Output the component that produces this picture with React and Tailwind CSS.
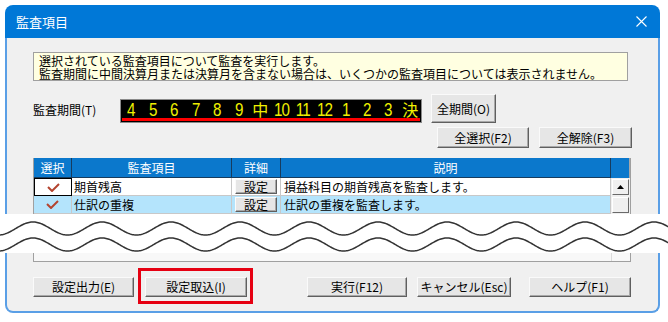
import React from "react";

const W = 668;
function wavePath(cy, amp, lambda, x0) {
  let d = "";
  for (let x = -2; x <= W + 2; x += 1) {
    const y = cy - amp * Math.cos((2 * Math.PI * (x - x0)) / lambda);
    d += (x === -2 ? "M" : "L") + x + " " + y.toFixed(2) + " ";
  }
  return d;
}

function Btn({ children, className = "" }) {
  return (
    <div
      className={`flex items-center justify-center bg-[#e6e6e6] border border-t-[#fafafa] border-l-[#fafafa] border-r-[#5f5f5f] border-b-[#5f5f5f] shadow-[inset_-1px_-1px_0_#a8a8a8] text-[12px] leading-none text-black whitespace-nowrap ${className}`}
    >
      {children}
    </div>
  );
}

function Check() {
  return (
    <svg width="13" height="9" viewBox="0 0 13 9">
      <path d="M1 4 L5 8 L12 1" fill="none" stroke="#b4442f" strokeWidth="2" strokeLinejoin="miter" />
    </svg>
  );
}

const cells = ["4", "5", "6", "7", "8", "9", "中", "10", "11", "12", "1", "2", "3", "決"];

export default function App() {
  return (
    <div className="w-[668px] h-[322px] bg-white overflow-hidden font-['Noto_Sans_CJK_JP',sans-serif] text-black">
      {/* top window fragment */}
      <div className="ml-[5px] mt-[5px] w-[655px] rounded-t-[8px] overflow-hidden">
        <div className="h-[33px] bg-[#0078d7] flex items-center justify-between pl-[11px] pr-[13px]">
          <span className="text-white text-[13px] leading-none">監査項目</span>
          <svg width="11" height="11" viewBox="0 0 11 11">
            <path d="M0.5 0.5 L10.5 10.5 M10.5 0.5 L0.5 10.5" stroke="#ffffff" strokeWidth="1.1" />
          </svg>
        </div>
        <div className="bg-[#f0f0f0] border-x-2 border-[#5a9fe6] px-[26px] pt-[14px] h-[176px] overflow-hidden">
          <div className="w-[595px] h-[29px] border border-[#a0a0a0] bg-[#ffffe1] pl-[5px] pt-[1px] text-[12px] leading-[13px] whitespace-nowrap">
            <div>選択されている監査項目について監査を実行します。</div>
            <div>監査期間に中間決算月または決算月を含まない場合は、いくつかの監査項目については表示されません。</div>
          </div>

          <div className="flex items-end mt-[13px] h-[29px]">
            <div className="w-[87px] mb-[7px] text-[12px] leading-none">監査期間(T)</div>
            <div className="w-[302px] h-[24px] bg-black border border-[#8a8a8a] flex flex-col">
              <div className="flex h-[18px] items-center">
                {cells.map((c, i) => (
                  <div key={i} className="flex-1 flex justify-center">
                    <span
                      className={
                        c.length === 1 && /[0-9]/.test(c)
                          ? "text-[#f0f000] text-[19px] leading-none font-['Liberation_Sans',sans-serif] scale-x-[0.8]"
                          : c.length === 2
                          ? "text-[#f0f000] text-[19px] leading-none font-['Liberation_Sans',sans-serif] scale-x-[0.8] tracking-[-1px]"
                          : "text-[#f0f000] text-[16px] leading-none font-['Noto_Sans_CJK_JP',sans-serif]"
                      }
                    >
                      {c}
                    </span>
                  </div>
                ))}
              </div>
              <div className="h-[3px] mx-[1px] bg-[#ff0000]" />
            </div>
            <Btn className="ml-[9px] w-[65px] h-[29px]">全期間(O)</Btn>
          </div>

          <div className="flex justify-end gap-[10px] mt-[4px]">
            <Btn className="w-[92px] h-[21px]">全選択(F2)</Btn>
            <Btn className="w-[93px] h-[21px]">全解除(F3)</Btn>
          </div>

          <div className="mt-[10px] w-[598px] border-x border-[#a0a0a0] text-[12px] leading-none">
            <div className="flex h-[20px] bg-[#0b78cc] text-white">
              <div className="w-[38px] border-r border-b border-[#173c5e] flex items-center justify-center">選択</div>
              <div className="w-[160px] border-r border-b border-[#173c5e] flex items-center justify-center">監査項目</div>
              <div className="w-[49px] border-r border-b border-[#173c5e] flex items-center justify-center">詳細</div>
              <div className="w-[330px] border-r border-b border-[#173c5e] flex items-center justify-center">説明</div>
              <div className="flex-1 border-r border-[#a8a8a8]" />
            </div>
            <div className="flex h-[18px] bg-white">
              <div className="w-[38px] border border-black flex items-center justify-center">
                <Check />
              </div>
              <div className="w-[160px] border-r border-b border-[#c8c8c8] flex items-center pl-[2px]">期首残高</div>
              <div className="w-[49px] border-r border-b border-[#c8c8c8] flex items-center justify-center">
                <Btn className="w-[42px] h-[15px]">設定</Btn>
              </div>
              <div className="w-[330px] border-r border-b border-[#c8c8c8] flex items-center pl-[3px]">損益科目の期首残高を監査します。</div>
              <div className="flex-1 bg-[#f0f0f0] p-[1px]">
                <div className="h-full flex items-center justify-center bg-[#f0f0f0] border border-t-white border-l-white border-r-[#6a6a6a] border-b-[#6a6a6a]">
                  <svg width="7" height="4" viewBox="0 0 7 4">
                    <path d="M0 4 L3.5 0 L7 4 Z" fill="#000" />
                  </svg>
                </div>
              </div>
            </div>
            <div className="flex h-[18px] bg-[#b4e4fc]">
              <div className="w-[38px] border-r border-b border-[#c8c8c8] flex items-center justify-center">
                <Check />
              </div>
              <div className="w-[160px] border-r border-b border-[#c8c8c8] flex items-center pl-[2px]">仕訳の重複</div>
              <div className="w-[49px] border-r border-b border-[#c8c8c8] flex items-center justify-center">
                <Btn className="w-[42px] h-[15px]">設定</Btn>
              </div>
              <div className="w-[330px] border-r border-b border-[#c8c8c8] flex items-center pl-[3px]">仕訳の重複を監査します。</div>
              <div className="flex-1 bg-[#f0f0f0] p-[1px]">
                <div className="h-full bg-[#f0f0f0] border border-t-white border-l-white border-r-[#6a6a6a] border-b-[#6a6a6a]" />
              </div>
            </div>
          </div>
        </div>
      </div>

      {/* break band */}
      <div className="h-[39px] bg-white">
        <svg width="668" height="39" viewBox="0 0 668 39">
          <path d={wavePath(14.5, 6.5, 69, 33)} fill="none" stroke="#333" strokeWidth="1.5" />
          <path d={wavePath(30.5, 6.5, 69, 33)} fill="none" stroke="#333" strokeWidth="1.5" />
        </svg>
      </div>

      {/* bottom window fragment */}
      <div className="ml-[5px] w-[655px] h-[60px] bg-[#f0f0f0] border-x-2 border-b-2 border-[#5a9fe6] rounded-b-[8px] px-[26px]">
        <div className="w-[598px] h-[9px] border-x border-b border-[#a0a0a0] bg-[#f8f8f8] flex justify-end">
          <div className="w-[19px] border-l border-[#dcdcdc]" />
        </div>
        <div className="flex mt-[15px] h-[20px]">
          <Btn className="w-[101px] h-[20px]">設定出力(E)</Btn>
          <div className="relative ml-[11px]">
            <Btn className="w-[102px] h-[20px]">設定取込(I)</Btn>
            <div className="absolute -left-[7px] -top-[9px] -right-[6px] -bottom-[7px] border-[3px] border-[#e60012]" />
          </div>
          <Btn className="ml-[60px] w-[100px] h-[20px]">実行(F12)</Btn>
          <Btn className="ml-[10px] w-[94px] h-[20px]">キャンセル(Esc)</Btn>
          <Btn className="ml-[18px] w-[102px] h-[20px]">ヘルプ(F1)</Btn>
        </div>
      </div>
    </div>
  );
}
